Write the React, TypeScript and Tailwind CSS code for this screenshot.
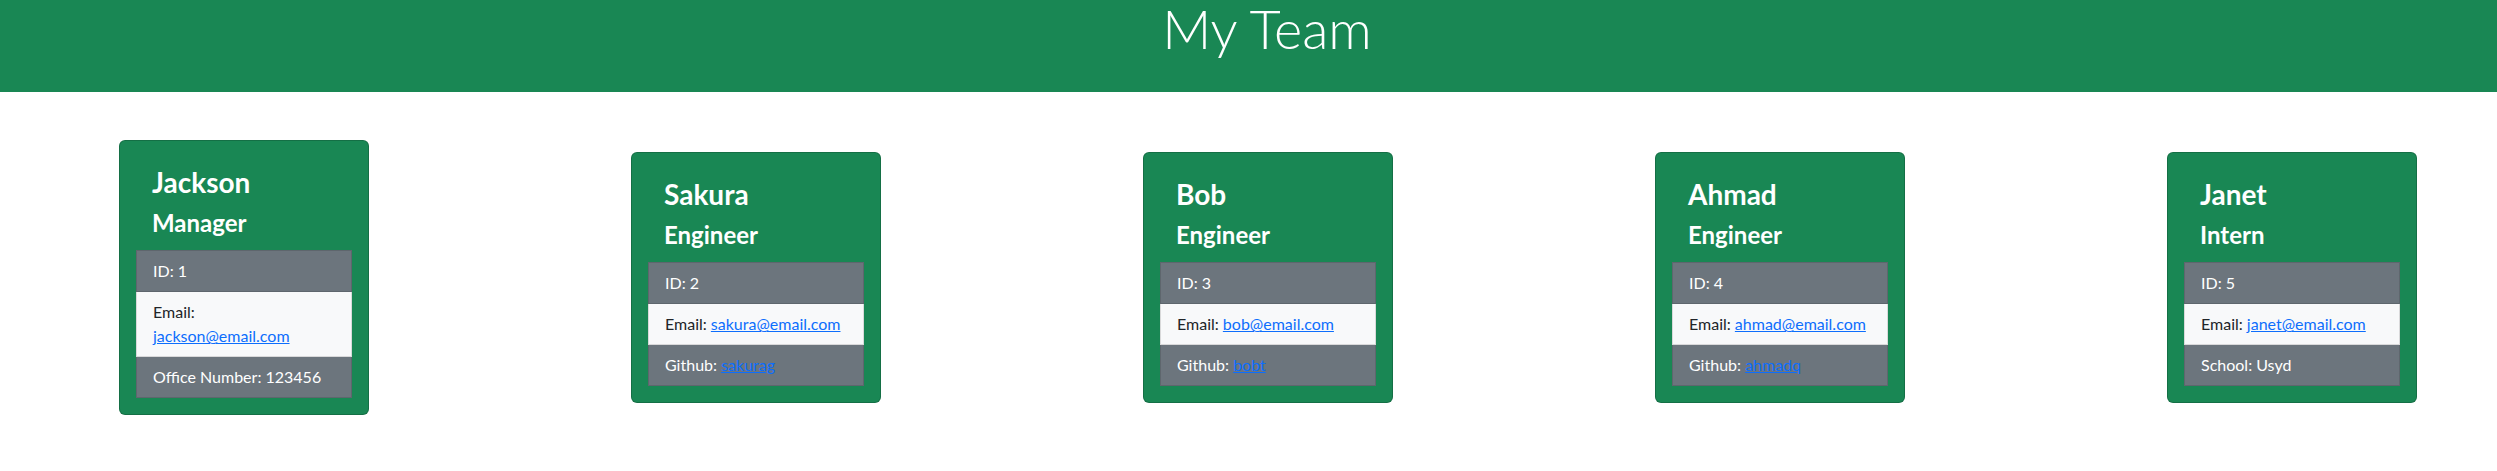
import React from "react";

type Member = {
  name: string;
  role: string;
  id: number;
  email: string;
  wrapEmail?: boolean;
  extraLabel: string;
  extraValue: string;
  extraLink?: boolean;
};

const team: Member[] = [
  { name: "Jackson", role: "Manager", id: 1, email: "jackson@email.com", wrapEmail: true, extraLabel: "Office Number", extraValue: "123456" },
  { name: "Sakura", role: "Engineer", id: 2, email: "sakura@email.com", extraLabel: "Github", extraValue: "sakurag", extraLink: true },
  { name: "Bob", role: "Engineer", id: 3, email: "bob@email.com", extraLabel: "Github", extraValue: "bobt", extraLink: true },
  { name: "Ahmad", role: "Engineer", id: 4, email: "ahmad@email.com", extraLabel: "Github", extraValue: "ahmadq", extraLink: true },
  { name: "Janet", role: "Intern", id: 5, email: "janet@email.com", extraLabel: "School", extraValue: "Usyd" },
];

function Card({ m }: { m: Member }) {
  return (
    <div className="w-[250px] shrink-0 rounded-md border border-black/[.175] bg-[#198754] p-4">
      <div className="pl-4 pt-[9px]">
        <h3 className="mb-[9px] text-[28px] font-bold leading-[1.2] text-white">{m.name}</h3>
        <h4 className="mb-[13px] text-[24px] font-bold leading-[1.2] text-white">{m.role}</h4>
      </div>
      <ul className="text-[16px] leading-[24px]">
        <li className="border border-black/[.125] bg-[#6c757d] px-4 py-2 text-white">ID: {m.id}</li>
        <li className="border border-t-0 border-black/[.125] bg-[#f8f9fa] px-4 py-2 text-[#212529]">
          Email:{m.wrapEmail ? <br /> : " "}
          <a href="#" className="text-[#0d6efd] underline">{m.email}</a>
        </li>
        <li className="border border-t-0 border-black/[.125] bg-[#6c757d] px-4 py-2 text-white">
          {m.extraLabel}:{" "}
          {m.extraLink ? (
            <a href="#" className="text-[#0d6efd] underline">{m.extraValue}</a>
          ) : (
            m.extraValue
          )}
        </li>
      </ul>
    </div>
  );
}

export default function App() {
  return (
    <div className="min-h-[471px] bg-white font-['Lato',sans-serif]">
      <header className="h-[92px] bg-[#198754] pl-[37px] text-center">
        <h1 className="text-[54px] font-light leading-[58px] text-white">My Team</h1>
      </header>
      <main className="flex items-center gap-[262px] pl-[119px] pt-[48px]">
        {team.map((m) => (
          <Card key={m.id} m={m} />
        ))}
      </main>
    </div>
  );
}
